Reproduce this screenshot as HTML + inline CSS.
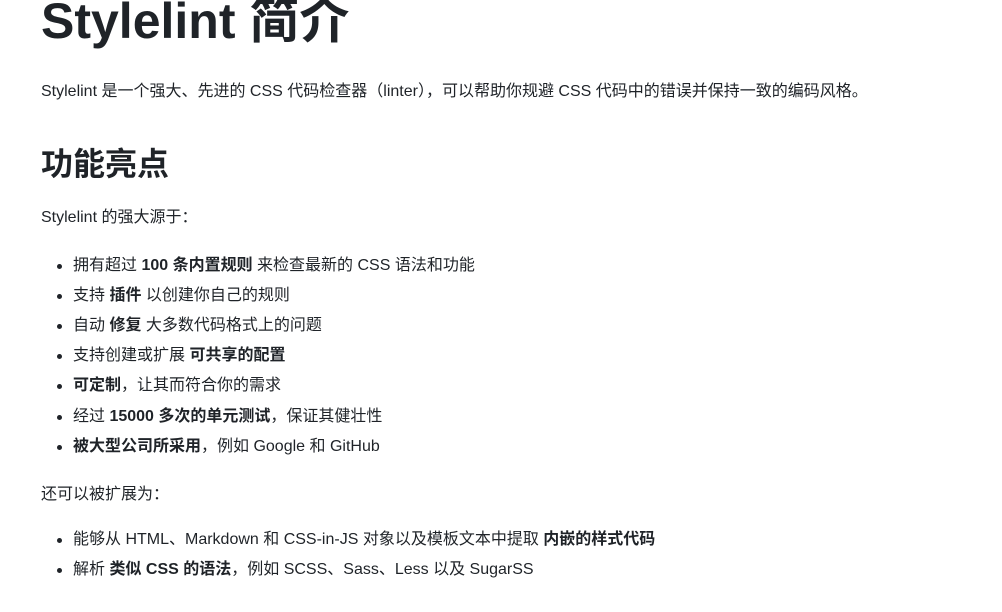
<!DOCTYPE html>
<html><head><meta charset="utf-8"><style>
body{margin:0;background:#fff;color:#1f2328;font-family:"Liberation Sans","Noto Sans CJK SC",sans-serif;font-size:16px;width:1002px;height:612px;overflow:hidden;position:relative}
.l{position:absolute;left:41px;white-space:nowrap;line-height:1}
h1,h2{margin:0;font-weight:bold}
.li{left:73px}
.li::before{content:"";position:absolute;left:-16px;top:6px;width:5px;height:5px;border-radius:50%;background:#1f2328}
b{font-weight:bold}
</style></head><body>
<h1 class="l" style="top:-4px;font-size:50px">Stylelint 简介</h1>
<div class="l" style="top:84px">Stylelint 是一个强大、先进的 CSS 代码检查器（linter），可以帮助你规避 CSS 代码中的错误并保持一致的编码风格。</div>
<h2 class="l" style="top:148px;font-size:32px">功能亮点</h2>
<div class="l" style="top:210px">Stylelint 的强大源于：</div>
<div class="l li" style="top:258px">拥有超过 <b>100 条内置规则</b> 来检查最新的 CSS 语法和功能</div>
<div class="l li" style="top:288px">支持 <b>插件</b> 以创建你自己的规则</div>
<div class="l li" style="top:318px">自动 <b>修复</b> 大多数代码格式上的问题</div>
<div class="l li" style="top:348px">支持创建或扩展 <b>可共享的配置</b></div>
<div class="l li" style="top:378px"><b>可定制</b>，让其而符合你的需求</div>
<div class="l li" style="top:409px">经过 <b>15000 多次的单元测试</b>，保证其健壮性</div>
<div class="l li" style="top:439px"><b>被大型公司所采用</b>，例如 Google 和 GitHub</div>
<div class="l" style="top:487px">还可以被扩展为：</div>
<div class="l li" style="top:532px">能够从 HTML、Markdown 和 CSS-in-JS 对象以及模板文本中提取 <b>内嵌的样式代码</b></div>
<div class="l li" style="top:562px">解析 <b>类似 CSS 的语法</b>，例如 SCSS、Sass、Less 以及 SugarSS</div>
</body></html>
